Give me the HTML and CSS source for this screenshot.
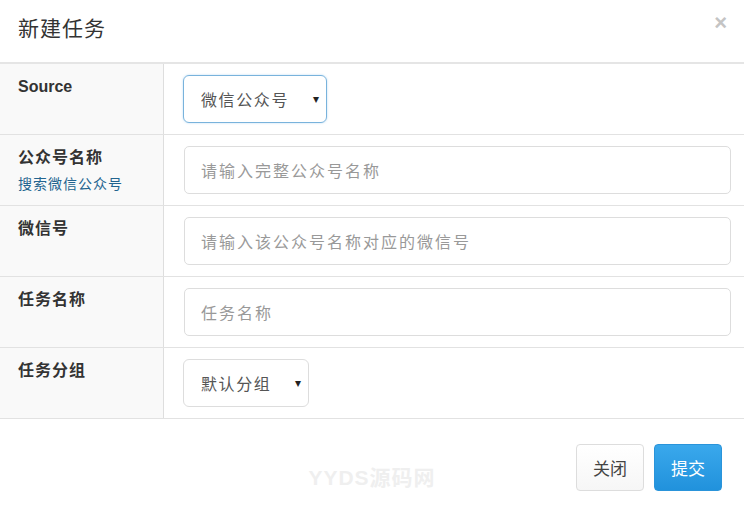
FILE: index.html
```html
<!DOCTYPE html>
<html lang="zh-CN">
<head>
<meta charset="utf-8">
<title>新建任务</title>
<link rel="stylesheet" href="styles.css">
</head>
<body>
<div class="modal">
  <div class="modal-header">
    <h4 class="modal-title">新建任务</h4>
    <span class="close">×</span>
  </div>
  <div class="form-table">
    <div class="row">
      <div class="label-cell"><span class="label">Source</span></div>
      <div class="field-cell">
        <div class="select select-focus select-source"><span>微信公众号</span><span class="caret">▾</span></div>
      </div>
    </div>
    <div class="row">
      <div class="label-cell">
        <span class="label">公众号名称</span>
        <a class="sublink">搜索微信公众号</a>
      </div>
      <div class="field-cell"><div class="input">请输入完整公众号名称</div></div>
    </div>
    <div class="row">
      <div class="label-cell"><span class="label">微信号</span></div>
      <div class="field-cell"><div class="input">请输入该公众号名称对应的微信号</div></div>
    </div>
    <div class="row">
      <div class="label-cell"><span class="label">任务名称</span></div>
      <div class="field-cell"><div class="input">任务名称</div></div>
    </div>
    <div class="row">
      <div class="label-cell"><span class="label">任务分组</span></div>
      <div class="field-cell">
        <div class="select select-group"><span>默认分组</span><span class="caret">▾</span></div>
      </div>
    </div>
  </div>
  <div class="modal-footer">
    <span class="watermark">YYDS源码网</span>
    <button class="btn btn-default">关闭</button>
    <button class="btn btn-primary">提交</button>
  </div>
</div>
</body>
</html>
```

FILE: styles.css
```css
* { box-sizing: border-box; }
html, body {
  margin: 0;
  padding: 0;
  background: #fff;
}
body {
  font-family: "Liberation Sans", Arial, "Noto Sans CJK SC", sans-serif;
  color: #333;
  width: 744px;
  height: 513px;
  overflow: hidden;
}
.modal { width: 744px; }
.modal-header {
  height: 64px;
  padding: 0 18px;
  display: flex;
  align-items: center;
  justify-content: space-between;
  border-bottom: 2px solid #e5e5e5;
}
.modal-title {
  margin: -8px 0 0;
  font-size: 21px;
  font-weight: normal;
  letter-spacing: 1px;
  color: #333;
}
.close {
  font-size: 22px;
  font-weight: bold;
  color: #c4c4c4;
  margin-right: -1px;
  margin-top: -16px;
}
.form-table { display: flex; flex-direction: column; }
.row {
  display: flex;
  height: 71px;
  border-bottom: 1px solid #e2e2e2;
}
.label-cell {
  width: 164px;
  background: #f9f9f9;
  border-right: 1px solid #dedede;
  padding: 11px 18px 0;
  display: flex;
  flex-direction: column;
}
.label {
  font-size: 16px;
  font-weight: bold;
  line-height: 24px;
  letter-spacing: 1px;
  color: #333;
}
.row:first-child .label { letter-spacing: 0; }
.sublink {
  font-size: 14px;
  color: #23648f;
  line-height: 20px;
  letter-spacing: 1px;
  margin-top: 4px;
}
.field-cell {
  flex: 1;
  padding: 11px 13px 0 19px;
}
.row + .row .field-cell { padding-left: 20px; }
.input {
  height: 48px;
  border: 1px solid #ddd;
  border-radius: 5px;
  padding: 0 16px;
  font-size: 16px;
  letter-spacing: 2px;
  color: #999;
  display: flex;
  align-items: center;
}
.select {
  height: 48px;
  border: 1px solid #ddd;
  border-radius: 6px;
  padding: 0 7px 0 17px;
  font-size: 16px;
  letter-spacing: 1.6px;
  color: #555;
  display: flex;
  align-items: center;
  justify-content: space-between;
}
.select-focus {
  border-color: #79b3dc;
  box-shadow: 0 0 2px rgba(102, 175, 233, 0.5);
}
.select-source { width: 144px; }
.select-group { width: 126px; margin-left: -1px; }
.caret { font-size: 12px; color: #222; letter-spacing: 0; }
.modal-footer {
  position: relative;
  height: 95px;
  display: flex;
  justify-content: flex-end;
  align-items: flex-start;
  padding: 25px 22px 0;
  gap: 10px;
}
.watermark {
  position: absolute;
  left: 0;
  right: 0;
  top: 42px;
  text-align: center;
  font-size: 21px;
  font-weight: bold;
  color: #efefef;
  letter-spacing: 1px;
  pointer-events: none;
}
.btn {
  width: 68px;
  height: 47px;
  border-radius: 4px;
  font-size: 17px;
  font-family: "Liberation Sans", Arial, "Noto Sans CJK SC", sans-serif;
  padding: 0;
  cursor: pointer;
}
.btn-default {
  background: linear-gradient(#fff, #f6f6f6);
  border: 1px solid #ddd;
  color: #444;
}
.btn-primary {
  background: linear-gradient(#3aa8ec, #2192dc);
  border: 1px solid #2a94da;
  color: #fff;
}
```
